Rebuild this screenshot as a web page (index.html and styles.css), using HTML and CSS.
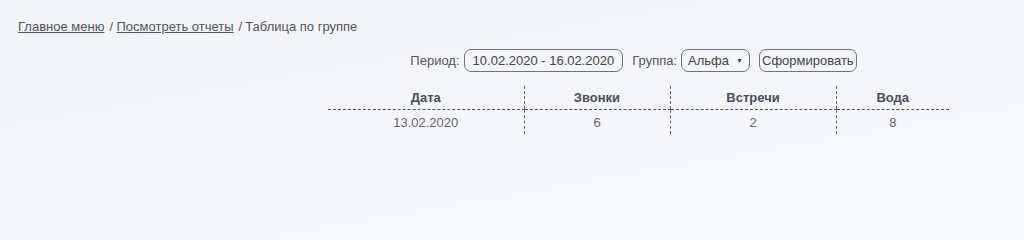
FILE: index.html
```html
<!DOCTYPE html>
<html lang="ru">
<head>
<meta charset="utf-8">
<title>Таблица по группе</title>
<link rel="stylesheet" href="styles.css">
</head>
<body>
<div class="page">
  <nav class="crumbs"><a href="#" class="crumb-link">Главное меню</a><span class="sep">/</span><a href="#" class="crumb-link">Посмотреть отчеты</a><span class="sep last">/</span><span class="crumb-current">Таблица по группе</span></nav>
  <main class="report">
    <form class="filters">
      <label class="flabel">Период:</label>
      <span class="field period">10.02.2020 - 16.02.2020</span>
      <label class="flabel">Группа:</label>
      <span class="field select">Альфа <span class="caret">▼</span></span>
      <button type="button" class="btn">Сформировать</button>
    </form>
    <table class="grid">
      <colgroup>
        <col class="c1"><col class="c2"><col class="c3"><col class="c4">
      </colgroup>
      <thead>
        <tr><th>Дата</th><th>Звонки</th><th>Встречи</th><th>Вода</th></tr>
      </thead>
      <tbody>
        <tr><td>13.02.2020</td><td>6</td><td>2</td><td>8</td></tr>
      </tbody>
    </table>
  </main>
</div>
</body>
</html>
```
FILE: styles.css
```css
html {
  min-height: 100%;
  background: linear-gradient(170deg, #f3f4f7 0%, #f4f6f9 50%, #f7f9fc 100%);
}
body {
  margin: 0;
  padding: 0;
  font-family: "Liberation Sans", Arial, sans-serif;
  font-size: 13px;
  color: #555;
}
.page {
  padding: 19px 0 0 18px;
}
.crumbs {
  line-height: 16px;
  color: #555;
  white-space: nowrap;
}
.crumb-link {
  color: #50545c;
  text-decoration: underline;
}
.sep {
  margin: 0 3.5px 0 5px;
}
.sep.last {
  margin: 0 3px 0 5px;
}
.crumb-current {
  color: #555;
}
.report {
  margin-left: 310px;
  width: 621px;
  display: flex;
  flex-direction: column;
  align-items: center;
}
.filters {
  margin-top: 14px;
  display: flex;
  align-items: center;
  gap: 4px;
  margin-left: -10px;
}
.flabel {
  color: #555;
}
.field, .btn {
  box-sizing: border-box;
  height: 23px;
  border: 1px solid #6f7278;
  border-radius: 7px;
  background: transparent;
  font-family: inherit;
  font-size: 13px;
  color: #444;
  display: inline-flex;
  align-items: center;
}
.period {
  padding: 0 8px;
  margin-right: 5px;
}
.select {
  padding: 0 6px;
  margin-right: 5px;
}
.caret {
  font-size: 7px;
  margin-left: 7px;
  color: #444;
}
.btn {
  padding: 0 2px;
  cursor: pointer;
}
.grid {
  margin-top: 14px;
  border-collapse: collapse;
  table-layout: fixed;
  width: 621px;
}
.c1 { width: 196px; }
.c2 { width: 146px; }
.c3 { width: 166px; }
.c4 { width: 113px; }
.grid th {
  height: 23px;
  padding: 0;
  font-weight: bold;
  color: #4a4e58;
  border-bottom: 1px dashed #555;
  text-align: center;
}
.grid td {
  height: 24px;
  padding: 0;
  color: #666;
  text-align: center;
}
.grid th + th, .grid td + td {
  border-left: 1px dashed #666;
}
```
